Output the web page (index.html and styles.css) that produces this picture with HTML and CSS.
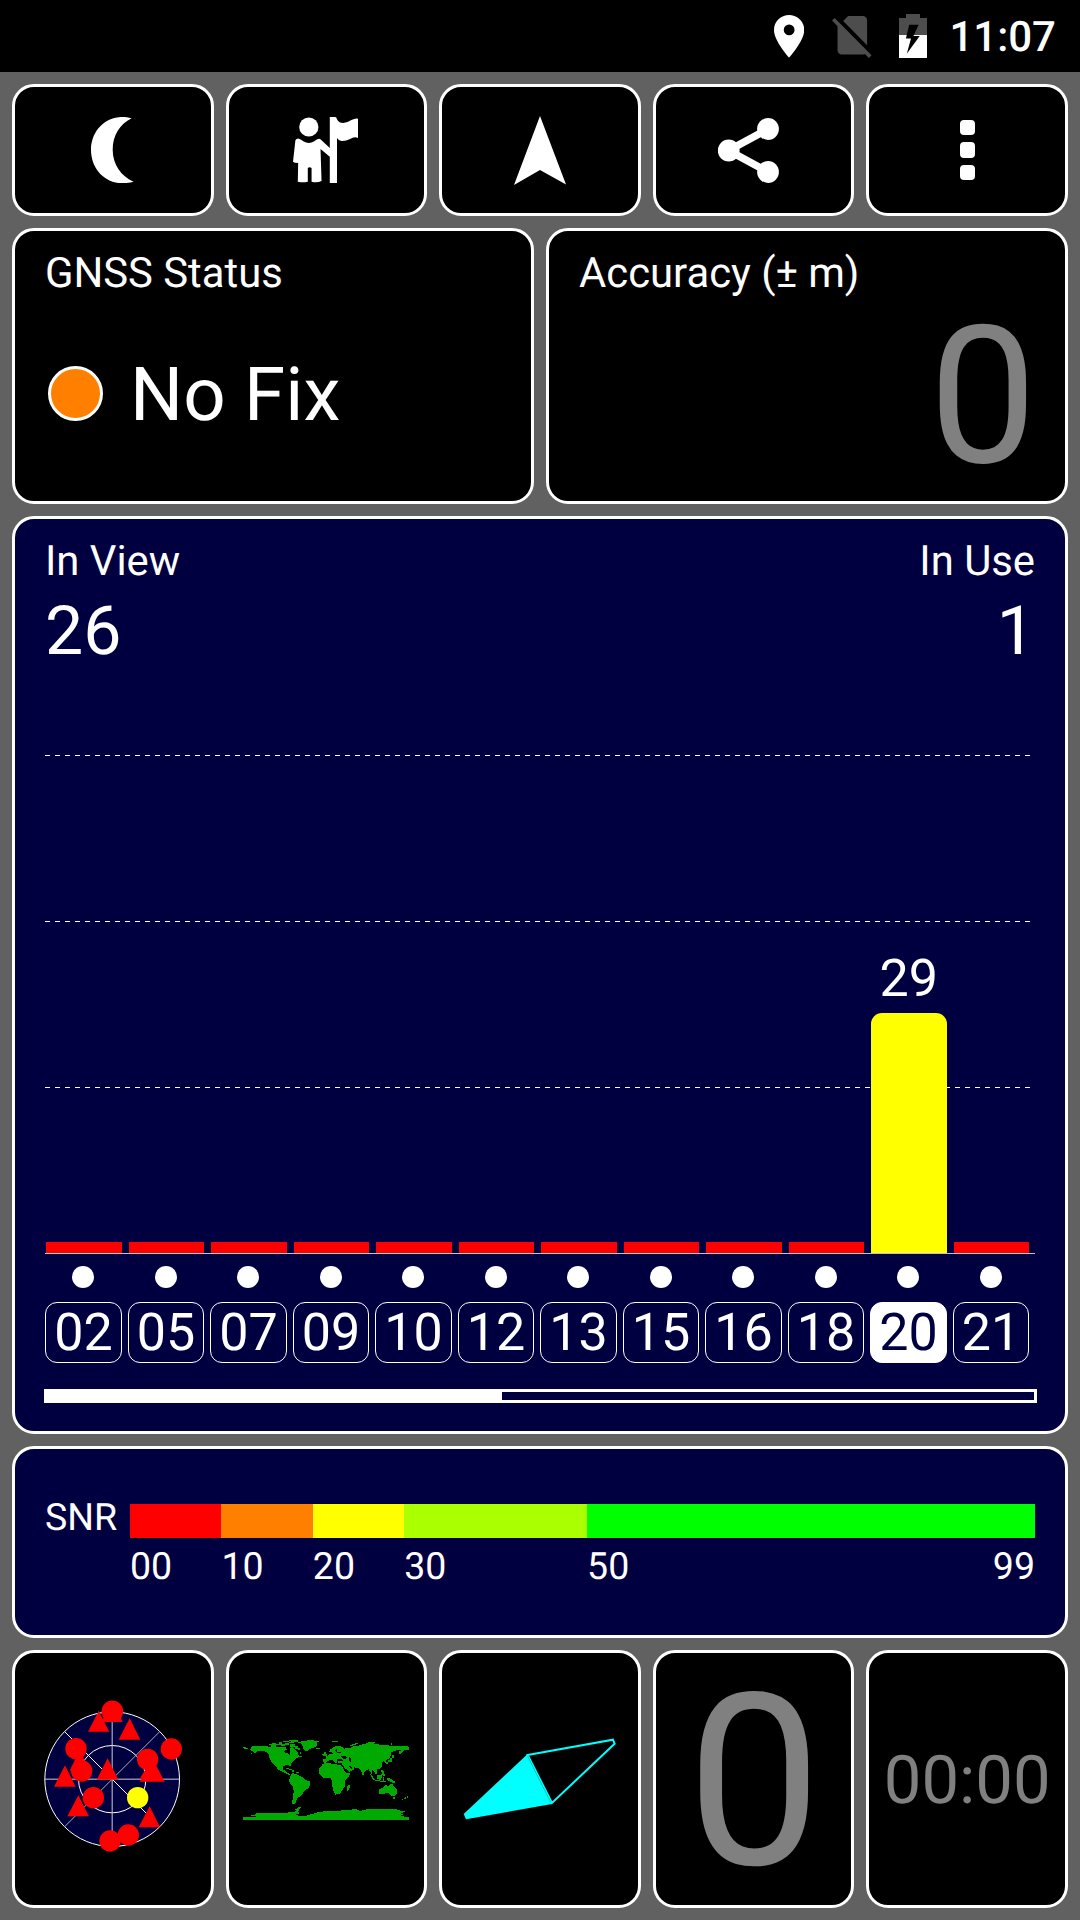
FILE: index.html
```html
<!DOCTYPE html>
<html>
<head>
  <meta charset="utf-8">
  <meta name="viewport" content="width=device-width, user-scalable=no">
  <title>GNSS Status</title>
  <link rel="stylesheet" href="styles.css">
</head>
<body>
<header class="statusbar">
  <svg class="st-pin" viewBox="5 2 14 20" preserveAspectRatio="none"><path fill="#fff" d="M12 2C8.13 2 5 5.13 5 9c0 5.25 7 13 7 13s7-7.75 7-13c0-3.87-3.13-7-7-7zm0 9.5a2.5 2.5 0 0 1 0-5 2.5 2.5 0 0 1 0 5z"/></svg>
  <svg class="st-sim" viewBox="2.38 3 18.74 19.62" preserveAspectRatio="none"><path fill="#4d4d4d" d="M18.99 5c0-1.1-.89-2-1.99-2h-7L7.66 5.34 19 16.68 18.99 5zM3.65 3.88L2.38 5.15 5 7.77V19c0 1.1.9 2 2 2h10.01c.35 0 .67-.1.96-.26l1.88 1.88 1.27-1.27L3.65 3.88z"/></svg>
  <svg class="st-bat" viewBox="899 14 28 44">
    <path fill="#4d4d4d" d="M906 14h14v4h7v17h-28V18h7z"/>
    <path fill="#fff" d="M899 35h28v23h-28z"/>
    <path fill="#000" d="M909.2 24.7h9.4L913.5 36h6.2l-12.9 17.8L911 38.4h-5.1z"/>
  </svg>
  <span class="clock">11:07</span>
</header>

<main class="screen">
  <nav class="row five tools">
    <div class="card"><svg class="ic-moon" viewBox="262 351 124 198" preserveAspectRatio="none"><path d="M380 355C364 350 350 351 342 352C295 358 262 400 262 450C262 500 295 543 342 549C360 550 375 549 386 545C350 530 325 493 325 450C325 405 346 373 380 355z"/></svg></div>
    <div class="card"><svg class="ic-guide" viewBox="852 351 189 198" preserveAspectRatio="none">
      <ellipse cx="898" cy="381" rx="28" ry="28.5"/>
      <path d="M859 421Q862 415 869 416Q876 418 882 424Q898 434 914 424Q921 417 928 416Q932 417 935 421L959 444V351H975Q979 352 980 358Q984 369 998 369Q1010 368 1022 360Q1033 354 1041 356V414Q1030 409 1018 417Q1005 424 993 423Q984 421 980 414V549H959V470L932 447L935 543Q922 549 906 545V504Q900 499 895 504V545Q880 549 866 545L867 489Q856 489 852 485z"/>
    </svg></div>
    <div class="card"><svg class="ic-arrow" viewBox="514 115 52 69"><path d="M540 115l26 68.5L540 169l-26 15z"/></svg></div>
    <div class="card"><svg class="ic-share" viewBox="718 118 71 65">
      <path d="M768 129l-39.500 21.500L768 172" fill="none" stroke="#fff" stroke-width="7.500"/>
      <circle cx="728.700" cy="150.500" r="10.900"/><circle cx="768" cy="129" r="10.900"/><circle cx="768" cy="172" r="10.900"/>
    </svg></div>
    <div class="card"><div class="dots"><i></i><i></i><i></i></div></div>
  </nav>

  <section class="row two">
    <div class="card info">
      <div class="label">GNSS Status</div>
      <div class="fix"><span class="lamp"></span><span>No Fix</span></div>
    </div>
    <div class="card info">
      <div class="label">Accuracy (± m)</div>
      <div class="accuracy">0</div>
    </div>
  </section>

  <section class="card navy sats">
    <div class="counts">
      <div><div class="label">In View</div><div class="count">26</div></div>
      <div class="right"><div class="label">In Use</div><div class="count">1</div></div>
    </div>
    <div class="plot">
      <svg class="grid" viewBox="0 0 990 499" stroke="#fff" stroke-dasharray="5 5"><path d="M0 .5h985M0 166.500h985M0 332.500h985"/></svg>
      <div class="bars">
        <div class="bar"></div><div class="bar"></div><div class="bar"></div><div class="bar"></div>
        <div class="bar"></div><div class="bar"></div><div class="bar"></div><div class="bar"></div>
        <div class="bar"></div><div class="bar"></div>
        <div class="col"><span class="value">29</span><div class="bar yellow" style="height:240px"></div></div>
        <div class="bar"></div>
      </div>
    </div>
    <div class="ids">
      <div><i></i><b>02</b></div>
      <div><i></i><b>05</b></div>
      <div><i></i><b>07</b></div>
      <div><i></i><b>09</b></div>
      <div><i></i><b>10</b></div>
      <div><i></i><b>12</b></div>
      <div><i></i><b>13</b></div>
      <div><i></i><b>15</b></div>
      <div><i></i><b>16</b></div>
      <div><i></i><b>18</b></div>
      <div><i></i><b class="used">20</b></div>
      <div><i></i><b>21</b></div>
    </div>
    <div class="scroll"><div class="thumb"></div></div>
  </section>

  <section class="card navy snr">
    <div class="snr-label">SNR</div>
    <div class="scale">
      <div class="c1"></div><div class="c2"></div><div class="c3"></div><div class="c4"></div><div class="c5"></div>
      <span>00</span><span>10</span><span>20</span><span>30</span><span class="ends"><span>50</span><span>99</span></span>
    </div>
  </section>

  <nav class="row five pages">
    <div class="card">
      <svg class="sky" viewBox="113 175 450 480">
        <circle cx="338.500" cy="415.500" r="202" fill="#000040"/>
        <g fill="none" stroke="#fff" stroke-width="3">
          <circle cx="338.500" cy="415.500" r="202"/>
          <circle cx="338.500" cy="415.500" r="101"/>
          <path d="M136 415.500h405M338.500 214v404" stroke="#ccd"/>
          <path d="M196 273l285 285"/>
          <path d="M196 558l285-285" stroke="#aab"/>
        </g>
        <g fill="#f00">
          <path d="M338 180l32 64h-64zM298 211l32 62h-64zM391 233l32 64h-65zM325 353l32 64h-65zM197 374l32 64h-65zM237 464l32 63h-65zM451 497l31 63h-64zM454 361l32 52h-64zM463 360l33 63h-64v0h-11l30-60zM241 329l30 61h-60z"/>
          <circle cx="339" cy="212" r="32.500"/><circle cx="230" cy="324" r="32"/><circle cx="247" cy="391" r="32"/>
          <circle cx="282" cy="471" r="32"/><circle cx="445" cy="356" r="32"/><circle cx="516" cy="325" r="32"/>
          <circle cx="332" cy="601" r="32"/><circle cx="387" cy="583" r="32"/>
        </g>
        <circle cx="415" cy="471" r="32" fill="#ff0"/>
      </svg>
    </div>
    <div class="card">
      <svg class="world" viewBox="69 90 498 240" fill="#0a0" shape-rendering="crispEdges">
        <!-- americas -->
        <path d="M91 117L97 108H130L150 110H190L198 112L192 127L203 130L208 135L211 128L210 114L218 111L226 118L233 126L233 133L243 140L234 143L228 144L222 150L215 158L212 165L210 172L207 167L204 166L196 166L189 170L188 178L195 182L199 186L204 189L212 193L208 195L198 190L186 184L175 179L168 170L160 163L153 155L149 145L147 135L140 127L128 122L115 122L107 128L98 127L100 123L92 122z"/>
        <path d="M69 112h8v3h8v2H75l-6-3zM93 129h4v2h-4z"/>
        <path d="M147 103h9v-4h12v4h10v-6h8v6h8v5h-12v-3h-14v5h-14v-4h-7zM190 93h16v3h-16zM196 99h10v5h-10zM207 91h28v4h-14v5h-14v-4h7zM210 103h16v5h9v5h6v8h-7v-5h-9v-5h-15zM240 126h4v5h-4zM193 116h9v4h-9z"/>
        <path d="M198 175h9v3h-9zM206 178h10v3h-10zM215 181h8v5h-8zM228 187h8v3h-8zM236 137h9v4h-9z"/>
        <path d="M213 191L222 190L235 195L248 202L255 210L272 215L270 223L265 235L256 240L248 250L240 259L232 265L228 275L226 281H217L218 262L221 248L220 232L211 220L207 212L210 203z"/>
        <path d="M232 97L248 93L275 90L299 95L291 98L292 108L283 112L270 116L264 121L262 124L252 121L248 110L243 100zM286 114h14v4h-12z"/>
        <!-- europe and asia -->
        <path d="M309 157V147H319L316 141L323 138L330 132L338 131L335 126L328 125L330 119L340 112L352 107L365 110L372 116L392 113L400 108L415 107L425 104L448 98L470 102L490 106L520 107H545L567 110V120L552 121L543 130L535 133L537 124L545 121H528L512 127L514 134L508 146L497 150L498 160L490 152L486 158L487 170L478 176L470 178L471 190L476 194L466 192L462 184L455 180L457 194L453 190L446 178L436 182L429 197L422 182L415 175L403 172L400 180L384 188L378 180L369 167L366 160H357L352 157L355 152H370L365 147H352L350 159L346 158L340 151H328L320 155L316 159z"/>
        <path d="M307 133h6v-8h6v5l4 6-4 3h-9zM337 94h16v3h-16zM341 98h6v2h-6zM388 108l10-6 15-4v3l-14 6zM445 95h20v4h-20zM513 99h4v6h-4zM486 134h4v12h-4zM517 134h4v11h-4zM511 145h6v5h-6zM505 151h12v4h-12zM498 157h6v4h-6z"/>
        <path d="M451 193l6 4 8 13h-6zM464 209h15v5h-12zM471 196h8l6-4 2 8-6 10-9-3zM488 202h4v11h-4zM484 180h5l4 10 4 9h-6l-6-9zM500 205h10l14 9 2 7-8-2-6-4-8-2zM480 213h18v3h-18z"/>
        <!-- africa -->
        <path d="M308 161L330 158L333 163L345 162L366 167L372 178L381 190H391L386 200L374 213V230L366 242L358 252L346 254L341 245L337 230L336 212L332 205L320 203L308 203L297 192L298 175L304 168zM386 224h4l-1 9-5 9h-4v-12z"/>
        <!-- australia -->
        <path d="M477 238L488 233L495 225L506 228L511 223H518L523 232L531 240L530 250L524 259L515 258L508 251L500 249L488 253L478 253zM519 262h6v4h-6zM561 257h3v7h-3zM556 262h3v4h-9v4h-3v-3h5z"/>
        <!-- antarctica -->
        <path d="M69 330V321H97L112 319L91 317L107 314L103 311L118 309H150L200 308L228 304L225 299L235 292H242L234 304L240 309L226 314L240 318H256L280 311L300 305L340 303L385 300L410 297L420 305L430 299L460 297H525L548 304H556L542 311L550 313L542 317L553 319L545 321H567V330z"/>
        <path fill="#000" d="M364 139h14l4 5-6 3-9-2zM386 141h5l2 6 1 9h-5zM350 127h12v3h-12zM347 117l4 0-1 9-4-2zM374 179l3-3 9 9-4 1zM388 167l10 6-3 3-9-6zM365 168l3-1 12 18-3 2z"/>
      </svg>
    </div>
    <div class="card">
      <svg class="compass" viewBox="100 290 460 250">
        <path fill="#0ff" d="M102 521L109 537L367 491L294 341z"/>
        <path fill="none" stroke="#0ff" stroke-width="6" d="M294 344L550 298L555 310L367 488z"/>
        <path stroke="#088" stroke-width="1.500" d="M294 348l69 138"/>
      </svg>
    </div>
    <div class="card"><span class="speed">0</span></div>
    <div class="card"><span class="timer">00:00</span></div>
  </nav>
</main>
</body>
</html>
```

FILE: styles.css
```css
* {
  box-sizing: border-box;
}
body {
  margin: 0;
  width: 1080px;
  height: 1920px;
  overflow: hidden;
  background: #616161;
  color: #fff;
  font-family: Roboto, "Liberation Sans", sans-serif;
  text-rendering: geometricPrecision;
}
svg {
  display: block;
  flex: none;
}

/* status bar */
.statusbar {
  display: flex;
  height: 72px;
  padding: 0 24px 0 774px;
  background: #000;
}
.st-pin {
  width: 30.300px;
  height: 42.500px;
  margin-top: 15px;
}
.st-sim {
  width: 39.600px;
  height: 42px;
  margin: 16px 0 0 28px;
}
.st-bat {
  width: 28px;
  height: 44px;
  margin: 14px 0 0 27px;
}
.clock {
  margin: 13px 0 0 22.500px;
  font-size: 42px;
  line-height: 50px;
  font-weight: 500;
}

/* cards */
.screen {
  display: grid;
  grid-template-rows: 132px 275.600px 918.600px 191.600px 258.600px;
  gap: 12px;
  padding: 12px;
}
.row {
  display: grid;
  gap: 12px;
}
.five {
  grid-template-columns: repeat(5, 1fr);
}
.two {
  grid-template-columns: 1fr 1fr;
}
.card {
  min-width: 0;
  border: 3px solid #fff;
  border-radius: 22px;
  background: #000;
}
.navy {
  background: #000040;
}
.tools .card,
.pages .card {
  display: flex;
  align-items: center;
  justify-content: center;
}
.tools svg {
  fill: #fff;
}
.ic-moon {
  width: 42.700px;
  height: 66px;
  margin-right: 1px;
}
.ic-guide {
  width: 65px;
  height: 66px;
  margin-right: 1px;
}
.ic-arrow {
  width: 52px;
  height: 69px;
}
.ic-share {
  width: 71px;
  height: 65px;
}
.dots {
  display: flex;
  flex-direction: column;
  gap: 7px;
}
.dots i {
  width: 15px;
  height: 15.500px;
  border-radius: 4px;
  background: #fff;
}

/* fix status and accuracy */
.info {
  padding: 17.700px 30px 0;
}
.label {
  font-size: 41.800px;
  line-height: 50px;
}
.fix {
  display: flex;
  align-items: center;
  gap: 27px;
  margin-top: 53px;
  padding-left: 3px;
  font-size: 74.500px;
  line-height: 88px;
}
.lamp {
  width: 55px;
  height: 55px;
  margin-bottom: 5px;
  border: 3px solid #fff;
  border-radius: 50%;
  background: #ff8000;
}
.accuracy {
  margin: 1px -2px 0 0;
  text-align: right;
  font-size: 192px;
  line-height: 193px;
  color: #808080;
}

/* satellites */
.sats {
  padding: 18px 30px 0;
}
.counts {
  display: flex;
  justify-content: space-between;
}
.right {
  text-align: right;
}
.count {
  margin-top: 4px;
  font-size: 68px;
  line-height: 80px;
}
.plot {
  position: relative;
  height: 499.500px;
  margin-top: 84.400px;
  border-bottom: 1.500px solid #c0c0d0;
}
.grid {
  position: absolute;
  left: 0;
  top: 0;
  width: 990px;
  height: 499px;
}
.bars {
  position: relative;
  display: grid;
  grid-template-columns: repeat(12, 75.500px);
  column-gap: 7px;
  align-items: end;
  height: 100%;
  padding-left: 1px;
}
.bar {
  height: 11px;
  background: #f00;
}
.col {
  text-align: center;
}
.value {
  display: block;
  margin-bottom: 4px;
  font-size: 52px;
  line-height: 60px;
}
.yellow {
  border-radius: 11px 11px 0 0;
  background: #ff0;
}
.ids {
  display: grid;
  grid-template-columns: repeat(12, 76.500px);
  column-gap: 6px;
  margin-top: 12px;
  padding-left: .2px;
}
.ids i {
  display: block;
  width: 22px;
  height: 22px;
  margin: 0 auto 14px;
  border-radius: 50%;
  background: #fff;
}
.ids b {
  display: block;
  height: 61px;
  border: 1.500px solid #fff;
  border-radius: 12px;
  text-align: center;
  font-size: 52px;
  line-height: 60px;
  font-weight: 400;
}
.ids .used {
  background: #fff;
  color: #000040;
}
.scroll {
  height: 14px;
  margin: 25.500px -2px 0 -1px;
  border: 3px solid #fff;
}
.thumb {
  width: 455px;
  height: 100%;
  background: #fff;
}

/* snr legend */
.snr {
  display: flex;
  padding: 48.400px 30px 0;
  font-size: 37.500px;
  line-height: 40px;
}
.snr-label {
  width: 85px;
}
.scale {
  display: grid;
  grid-template-columns: 10fr 10fr 10fr 20fr 49fr;
  grid-template-rows: 34px 40px;
  row-gap: 9px;
  flex: 1;
  padding-top: 6px;
}
.c1 {
  background: #f00;
}
.c2 {
  background: #ff8000;
}
.c3 {
  background: #ff0;
}
.c4 {
  background: #af0;
}
.c5 {
  background: #0f0;
}
.ends {
  display: flex;
  justify-content: space-between;
}

/* page buttons */
.sky {
  width: 150px;
  height: 160px;
  margin: 0 1px 1px 0;
}
.world {
  width: 166px;
  height: 80px;
  margin-top: 2px;
}
.compass {
  width: 153.300px;
  height: 83.300px;
}
.speed,
.timer {
  color: #808080;
  font-size: 240px;
  line-height: 240px;
}
.speed {
  padding: 5px 0 0 1px;
}
.timer {
  padding-top: 3px;
  font-size: 67px;
  line-height: 80px;
}
```
